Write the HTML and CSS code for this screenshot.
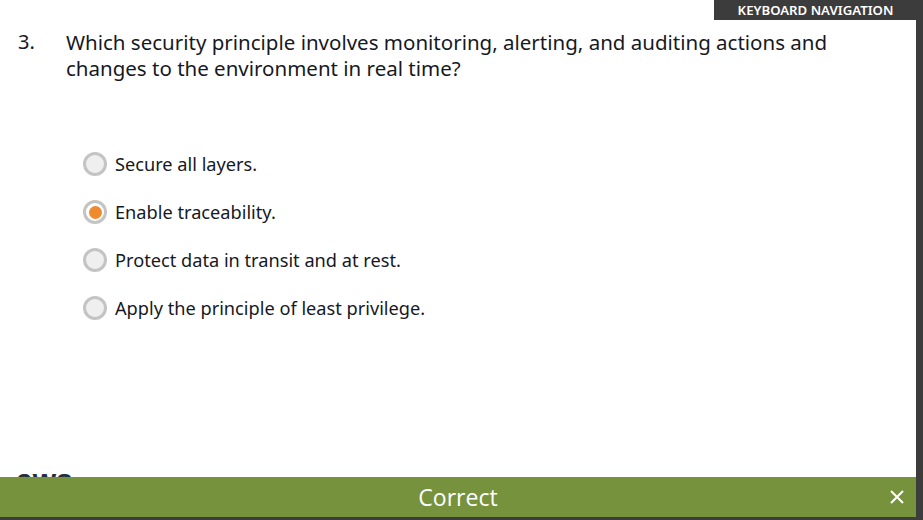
FILE: index.html
```html
<!DOCTYPE html>
<html>
<head>
<meta charset="utf-8">
<link rel="stylesheet" href="styles.css">
</head>
<body>
<div class="frame">
  <div class="panel">
    <div class="question">
      <span class="num">3.</span>
      <p class="qtext">Which security principle involves monitoring, alerting, and auditing actions and changes to the environment in real time?</p>
    </div>
    <ul class="options">
      <li class="opt"><span class="radio"></span><span>Secure all layers.</span></li>
      <li class="opt"><span class="radio checked"></span><span>Enable traceability.</span></li>
      <li class="opt"><span class="radio"></span><span>Protect data in transit and at rest.</span></li>
      <li class="opt"><span class="radio"></span><span>Apply the principle of least privilege.</span></li>
    </ul>
    <div class="spacer"></div>
    <div class="logo">aws</div>
    <div class="feedback">
      <span class="fb-text">Correct</span>
      <svg class="close" width="16" height="16" viewBox="0 0 16 16"><path d="M2 2 L14 14 M14 2 L2 14" stroke="#fff" stroke-width="2" fill="none"/></svg>
    </div>
  </div>
  <div class="kbd">KEYBOARD NAVIGATION</div>
</div>
</body>
</html>
```
FILE: styles.css
```css
html, body {
  margin: 0;
  padding: 0;
  width: 923px;
  height: 520px;
  overflow: hidden;
  background: #3c3c3c;
  font-family: "Noto Sans", "Open Sans", sans-serif;
}
.frame {
  position: relative;
  width: 923px;
  height: 520px;
}
.panel {
  width: 916px;
  height: 517px;
  background: #fff;
  display: flex;
  flex-direction: column;
  position: relative;
}
.kbd {
  position: absolute;
  top: 0;
  right: 0;
  width: 209px;
  height: 20px;
  background: #3c3c3c;
  color: #fff;
  font-size: 13.2px;
  font-weight: 600;
  line-height: 20px;
  text-align: center;
  padding-right: 6px;
  box-sizing: border-box;
}
.question {
  display: flex;
  padding: 29px 0 0 18px;
  color: #16191f;
}
.num {
  width: 48px;
  font-size: 20px;
  line-height: 26px;
}
.qtext {
  margin: 0;
  width: 790px;
  font-size: 20.5px;
  line-height: 26px;
}
.options {
  list-style: none;
  margin: 0;
  padding: 71px 0 0 83px;
  display: flex;
  flex-direction: column;
  gap: 24px;
}
.opt {
  display: flex;
  align-items: center;
  gap: 8px;
  height: 24px;
  font-size: 18.2px;
  color: #16191f;
}
.radio {
  box-sizing: border-box;
  width: 24px;
  height: 24px;
  border-radius: 50%;
  border: 3px solid #c4c4c4;
  background: #efefef;
  display: flex;
  align-items: center;
  justify-content: center;
}
.radio.checked {
  background: #fff;
}
.radio.checked::after {
  content: "";
  width: 13px;
  height: 13px;
  border-radius: 50%;
  background: #f08a2e;
}
.spacer {
  flex: 1;
}
.logo {
  position: absolute;
  left: 16px;
  bottom: 22px;
  font-family: "Liberation Sans", sans-serif;
  font-weight: bold;
  font-size: 30px;
  line-height: 30px;
  color: #232f3e;
}
.feedback {
  position: relative;
  z-index: 1;
  height: 40px;
  background: #76923c;
  display: flex;
  align-items: center;
  justify-content: center;
}
.fb-text {
  color: #fff;
  font-family: "Open Sans", sans-serif;
  font-size: 23px;
}
.close {
  position: absolute;
  right: 11px;
  top: 12px;
}
```
